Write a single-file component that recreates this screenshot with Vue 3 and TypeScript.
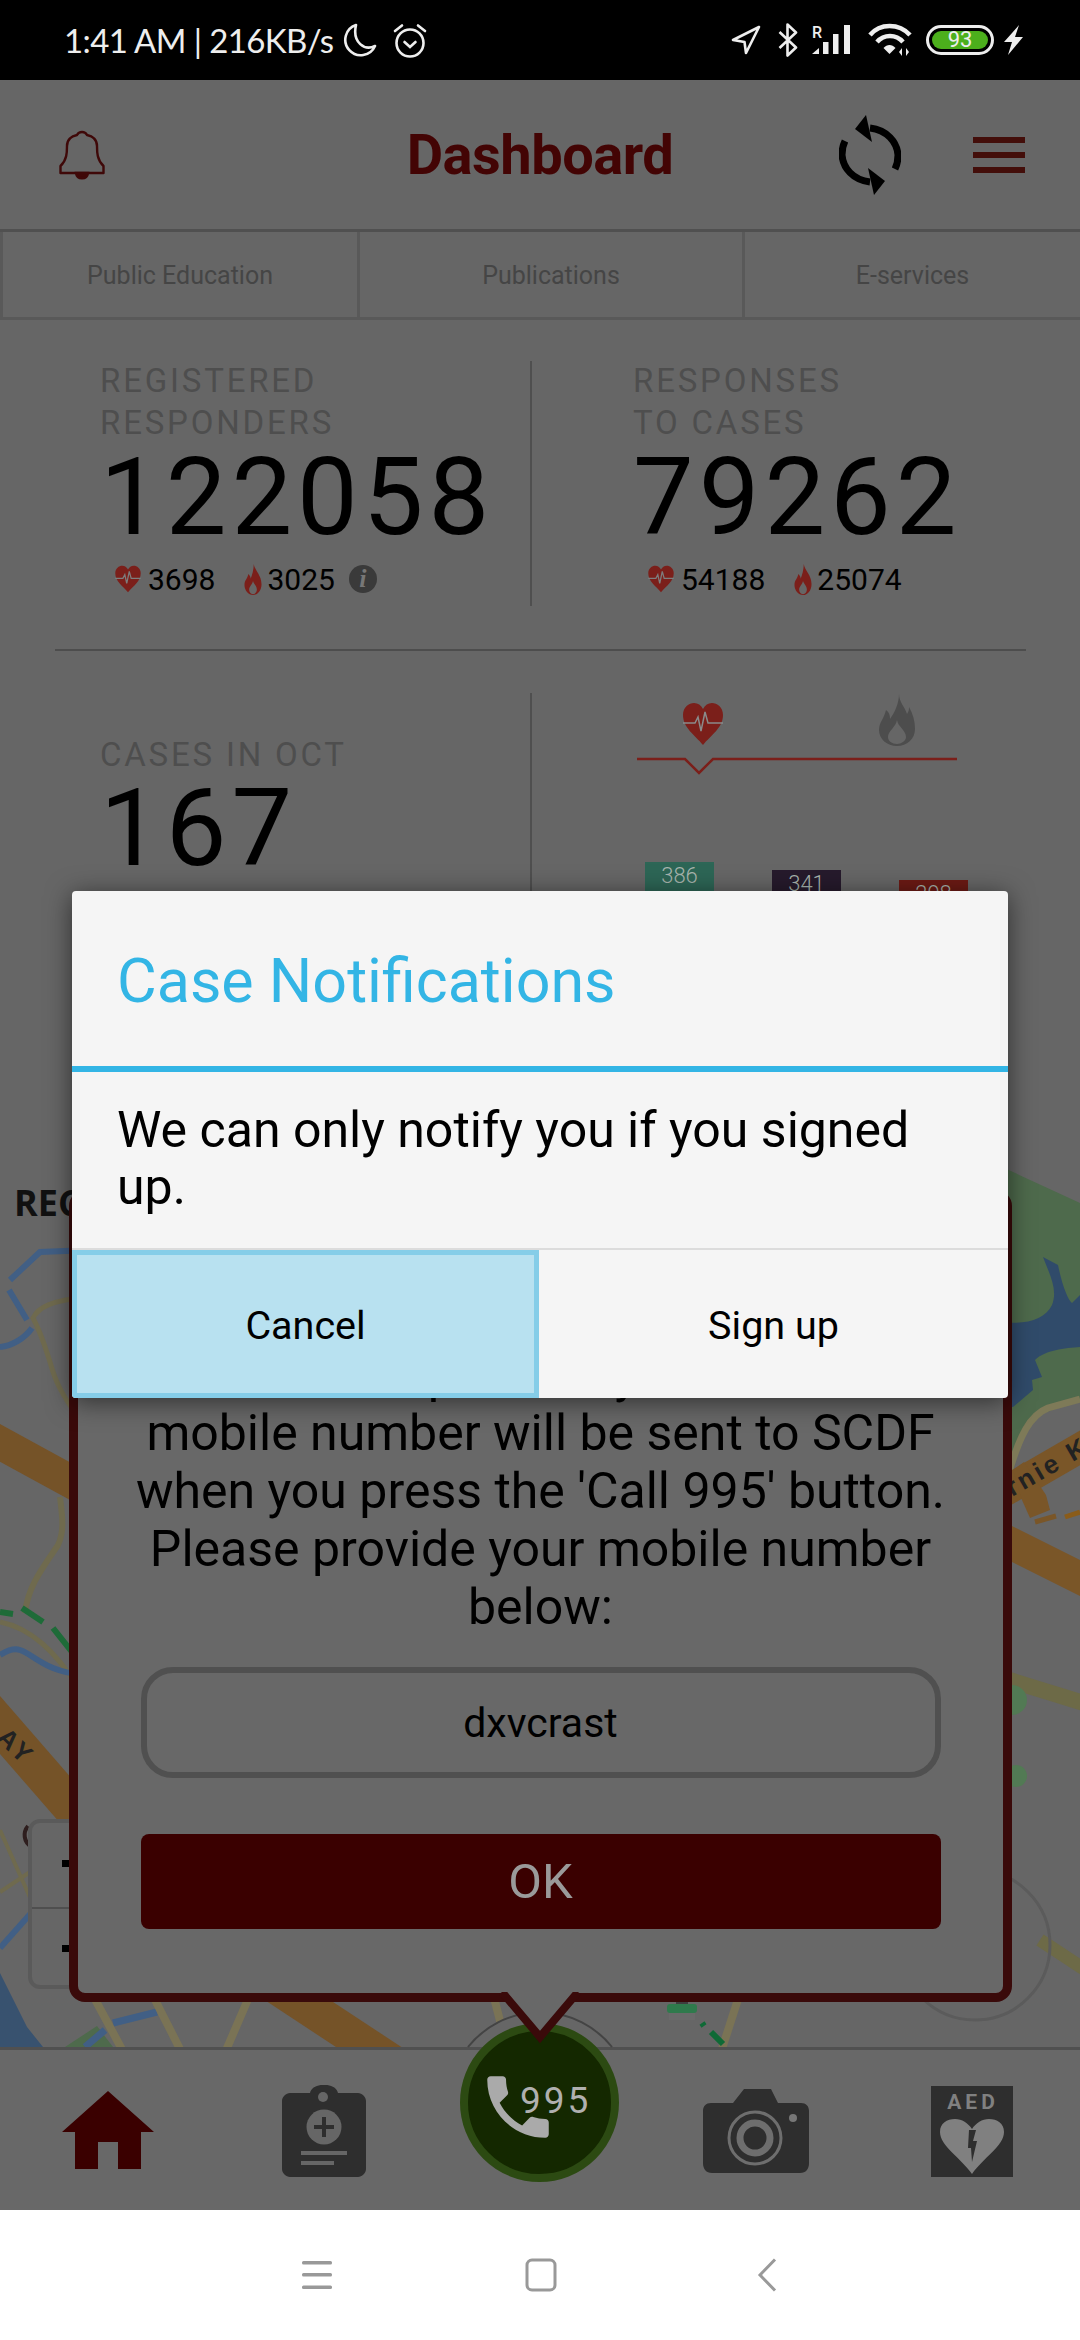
<template>
  <div class="phone">
    <div class="status">
      <div class="status-left">
        <span class="clock">1:41 AM | 216KB/s</span>
        <svg class="moon" width="34" height="34" viewBox="0 0 34 34" fill="none" stroke="#eee" stroke-width="2.6">
          <path d="M13 2 A15.5 15.5 0 1 0 32 23 C22 28 9 20 13 2Z" stroke-linejoin="round" />
        </svg>
        <svg class="alarm" width="34" height="35" viewBox="0 0 34 35" fill="none" stroke="#eee" stroke-width="2.6" stroke-linecap="round">
          <circle cx="17" cy="20" r="13.5" />
          <path d="M11.5 19 L17 24 L22.5 19" />
          <path d="M2 8 L9 2.5 M32 8 L25 2.5" />
        </svg>
      </div>
      <div class="status-right">
        <svg width="30" height="30" viewBox="0 0 30 30" fill="none" stroke="#eee" stroke-width="2.6" stroke-linejoin="round">
          <path d="M28 2 L2 15 L13.5 17 L15 28Z" />
        </svg>
        <svg class="bt" width="20" height="34" viewBox="0 0 20 34" fill="none" stroke="#eee" stroke-width="2.6" stroke-linejoin="round">
          <path d="M1.5 9 L18 24.5 L9.5 32.5 V1.5 L18 9.5 L1.5 25" />
        </svg>
        <div class="signal">
          <span class="roam">R</span>
          <svg width="40" height="30" viewBox="0 0 40 30" fill="#eee">
            <path d="M0 29 L7 23 V29Z" />
            <rect x="11" y="17" width="5.5" height="12" />
            <rect x="21" y="9" width="5.5" height="20" />
            <rect x="32" y="0" width="6" height="29" />
          </svg>
        </div>
        <svg class="wifi" width="44" height="34" viewBox="0 0 44 34" fill="none" stroke="#eee" stroke-width="4.5">
          <path d="M2 12 C12 0 31 0 42 12" />
          <path d="M9 19 C16 11 28 11 35 19" />
          <path d="M15.500 25 L21.500 31 L27.500 25 C24 21 19 21 15.500 25Z" fill="#eee" stroke="none" />
          <path d="M34 33 V25 L31 29Z M38 25 V33 L41 29Z" fill="#eee" stroke="none" />
        </svg>
        <div class="battery"><span class="battery-fill">93</span></div>
        <svg class="bolt" width="20" height="30" viewBox="0 0 20 30" fill="#eee">
          <path d="M15 0 L0 17 H8 L4 30 L19 12 H11Z" />
        </svg>
      </div>
    </div>

    <div class="screen">
      <header class="top-bar">
        <div class="top-left">
          <svg width="46" height="50" viewBox="0 0 46 50" fill="none" stroke="#3f0808" stroke-width="2.4">
            <path d="M1.500 43 V36 C8 30 8 22 8 16 C8 10 12 6 18 5 C20 1 26 1 28 5 C34 6 38 10 38 16 C38 22 38 30 44.500 36 V43Z" stroke-linejoin="round" />
            <path d="M17 43 C18 50 28 50 29 43Z" fill="#3f0808" />
          </svg>
        </div>
        <h1 class="title">Dashboard</h1>
        <div class="top-right">
          <svg width="62" height="80" viewBox="0 0 62 80" fill="none" stroke="#000" stroke-width="7">
            <path d="M31 13 C48 15 58 27 59 40 C59 45 58 50 56 54" />
            <path d="M31 67 C14 65 4 53 3 40 C3 35 4 30 6 26" />
            <path d="M27 0 L16 14 L33 27Z" fill="#000" stroke="none" />
            <path d="M35 80 L46 66 L29 53Z" fill="#000" stroke="none" />
          </svg>
          <div class="burger"><span></span><span></span><span></span></div>
        </div>
      </header>

      <nav class="sub-tabs">
        <div v-for="tab in subTabs" :key="tab" class="sub-tab">{{ tab }}</div>
      </nav>

      <section class="stats">
        <div class="stat-row">
          <div v-for="stat in totals" :key="stat.value" class="stat-cell">
            <div class="stat-label">{{ stat.line1 }}<br />{{ stat.line2 }}</div>
            <div class="stat-value">{{ stat.value }}</div>
            <div class="stat-split">
              <svg class="mini-heart" width="28" height="30" viewBox="0 0 44 44">
                <path d="M22 43 C14 33 2 26 2 13 C2 5 8 1 13 1 C17 1 20 3 22 7 C24 3 27 1 31 1 C36 1 42 5 42 13 C42 26 30 33 22 43Z" fill="#7b1f1a" />
                <path d="M2 21 H14 L17 15 L20 29 L24 10 L27 21 H42" fill="none" stroke="#7d7d7d" stroke-width="2" />
              </svg>
              <span class="split-num">{{ stat.heart }}</span>
              <svg class="mini-flame" width="20" height="31" viewBox="0 0 24 40">
                <path d="M13 0 C14 8 23 14 23 26 C23 34 18 40 12 40 C6 40 1 34 1 27 C1 21 5 19 6 13 C8 15 9 17 9 19 C11 14 13 7 13 0Z" fill="#7b1f1a" />
                <path d="M12 22 C13 26 17 28 17 33 C17 36 15 39 12 39 C9 39 7 36 7 33 C7 29 11 27 12 22Z" fill="#666" />
              </svg>
              <span class="split-num">{{ stat.fire }}</span>
              <span v-if="stat.info" class="info">i</span>
            </div>
          </div>
        </div>

        <div class="stat-rule"></div>

        <div class="stat-row month-row">
          <div class="stat-cell month-cell">
            <div class="stat-label">CASES IN OCT</div>
            <div class="stat-value">167</div>
          </div>
          <div class="stat-cell chart-cell">
            <div class="chart-tabs">
              <svg width="46" height="44" viewBox="0 0 44 44">
                <path d="M22 43 C14 33 2 26 2 13 C2 5 8 1 13 1 C17 1 20 3 22 7 C24 3 27 1 31 1 C36 1 42 5 42 13 C42 26 30 33 22 43Z" fill="#7b1f1a" />
                <path d="M2 21 H14 L17 15 L20 29 L24 10 L27 21 H42" fill="none" stroke="#8a8a8a" stroke-width="1.500" />
              </svg>
              <svg width="38" height="52" viewBox="0 0 38 52">
                <path d="M21 0 C21 8 27 13 29 20 C31 17 31 15 31 13 C35 20 37 27 37 35 C37 45 29 52 19 52 C9 52 1 45 1 36 C1 28 6 25 8 16 C11 18 12 21 12 25 C17 18 21 9 21 0Z" fill="#4d4d4d" />
                <path d="M19 26 C20 33 28 36 28 43 C28 47 23 50 19 50 C14 50 10 47 10 43 C10 37 18 33 19 26Z" fill="#666" />
              </svg>
            </div>
            <svg class="chart-line" width="320" height="20" viewBox="0 0 320 20" fill="none" stroke="#7b1f1a" stroke-width="2.500">
              <path d="M0 3 H48 L62 17 L76 3 H320" />
            </svg>
            <div class="bars">
              <div v-for="bar in bars" :key="bar.label" class="bar" :style="{ height: bar.height + 'px', background: bar.color }">
                {{ bar.label }}
              </div>
            </div>
          </div>
        </div>
      </section>

      <section class="map">
        <svg class="map-canvas" width="1080" height="887" viewBox="0 1160 1080 887" fill="none">
          <!-- left edge -->
          <path d="M90 1250 L40 1252 L10 1280 M9 1290 L27 1320 M32 1328 C25 1338 12 1346 0 1347" stroke="#415f85" stroke-width="6" />
          <path d="M90 1297 C50 1300 38 1308 33 1318 C42 1335 46 1350 50 1362 C55 1380 60 1392 80 1420" stroke="#6f6a4e" stroke-width="5" />
          <path d="M-20 1432 L110 1503" stroke="#755328" stroke-width="33" />
          <path d="M60 1497 C62 1515 65 1530 58 1545 C45 1565 28 1585 25 1613" stroke="#6f6a4e" stroke-width="6" />
          <path d="M0 1622 C30 1628 55 1650 80 1690" stroke="#6f6a4e" stroke-width="5" />
          <path d="M0 1612 L13 1614 M22 1608 L43 1622 M53 1628 L72 1652" stroke="#1e6b38" stroke-width="6" />
          <path d="M0 1655 C8 1650 14 1648 20 1650 C35 1655 45 1672 85 1675" stroke="#415f85" stroke-width="6" />
          <path d="M-20 1702 L100 1840" stroke="#755328" stroke-width="38" />
          <text x="0" y="1752" class="map-label" transform="rotate(44 14 1740)">AY</text>
          <path d="M0 1830 L32 1902 M0 1892 L30 1872" stroke="#6f6a4e" stroke-width="4" />
          <path d="M0 1948 L32 1912" stroke="#415f85" stroke-width="6" />
          <path d="M0 1973 L27 2027 L43 2047 H0Z" fill="#38526f" />
          <path d="M28 1826 C23 1832 23 1842 32 1847" stroke="#2e1e1e" stroke-width="4" />
          <rect x="30" y="1821" width="60" height="166" rx="10" fill="#666" stroke="#5a5a5a" stroke-width="4" />
          <path d="M32 1908 H70" stroke="#4f4f4f" stroke-width="2" />
          <rect x="62" y="1860" width="7" height="7" fill="#000" />
          <rect x="62" y="1945" width="7" height="7" fill="#000" />

          <!-- bottom strip -->
          <path d="M65 2047 L97 2026 L113 2047Z" fill="#4e6a4c" />
          <path d="M85 2047 L105 2030" stroke="#415f85" stroke-width="7" />
          <path d="M113 2023 L157 2012" stroke="#415f85" stroke-width="7" />
          <path d="M90 1990 L125 2055 M150 1990 L183 2055 M252 1990 L224 2055 M492 1990 L505 2040" stroke="#7a7355" stroke-width="8" />
          <path d="M270 1982 L396 2065" stroke="#755328" stroke-width="36" />
          <path d="M741 1990 L720 2055" stroke="#7a7355" stroke-width="8" />
          <path d="M702 2023 L704 2026 M711 2032 L723 2044" stroke="#0f6a36" stroke-width="6" />
          <rect x="676" y="1996" width="12" height="12" fill="#3e3e3e" />
          <rect x="667" y="2004" width="30" height="9" rx="3" fill="#2f7a4c" />
          <rect x="669" y="2013" width="26" height="7" fill="#6a6a6a" />

          <!-- right edge -->
          <path d="M1000 1166 L1080 1203 V1400 L1033 1417 L1000 1480Z" fill="#4e6a4c" />
          <path d="M1000 1322 C1025 1325 1045 1320 1052 1305 C1058 1290 1050 1275 1043 1257 L1058 1265 C1062 1285 1068 1300 1072 1303 L1080 1295 V1347 C1065 1348 1045 1350 1035 1360 L1042 1377 L1032 1380 L1033 1390 L1013 1407 H1000Z" fill="#304b6a" />
          <path d="M1008 1475 C1020 1435 1030 1415 1048 1408 L1080 1399" stroke="#7e7a58" stroke-width="7" />
          <path d="M990 1500 L1090 1442" stroke="#7a5628" stroke-width="30" />
          <path d="M1013 1470 L1024 1462 L1046 1495 L1050 1510 L1030 1518 L1022 1500Z" fill="#7a5628" />
          <path d="M1035 1522 L1056 1516" stroke="#7a5628" stroke-width="5" />
          <path d="M1065 1517 L1080 1512" stroke="#8a5c1a" stroke-width="5" />
          <path d="M990 1533 L1090 1583" stroke="#7a5628" stroke-width="32" />
          <text x="1012" y="1497" class="map-label" transform="rotate(-30 1012 1497)">rnie K</text>
          <path d="M990 1674 L1090 1705" stroke="#6d6a47" stroke-width="16" />
          <circle cx="1012" cy="1700" r="15" fill="#527a54" />
          <circle cx="1016" cy="1776" r="11" fill="#527a54" />
          <path d="M1040 1940 L1090 1973" stroke="#6d6a47" stroke-width="13" />
          <circle cx="975" cy="1945" r="75" stroke="#5b5b5b" stroke-width="3" />
        </svg>
        <div class="map-title">RECENT CASES</div>
      </section>

      <footer class="tab-bar">
        <div class="tab-item">
          <svg width="92" height="80" viewBox="0 0 92 80" fill="#3a0000">
            <path d="M46 0 L92 41 H79 V78 H56 V51 H36 V78 H13 V41 H0Z" />
          </svg>
        </div>
        <div class="tab-item">
          <svg width="84" height="92" viewBox="0 0 84 92">
            <path d="M8 8 H28 C30 -3 54 -3 56 8 H76 C80 8 84 12 84 16 V84 C84 88 80 92 76 92 H8 C4 92 0 88 0 84 V16 C0 12 4 8 8 8Z" fill="#2e2e2e" />
            <circle cx="41" cy="12" r="5" fill="#666" />
            <circle cx="42" cy="42" r="17.500" fill="#666" />
            <path d="M42 32 V52 M32 42 H52" stroke="#2e2e2e" stroke-width="4" />
            <path d="M19 68 H65" stroke="#666" stroke-width="4" />
            <path d="M19 78 H52" stroke="#666" stroke-width="4" />
          </svg>
        </div>
        <div class="tab-item call-slot">
          <svg class="call-arc" width="200" height="60" viewBox="0 0 200 60" fill="#666" stroke="#444" stroke-width="2">
            <path d="M28 44 A92 92 0 0 1 172 44" />
          </svg>
          <div class="call-button">
            <svg class="call-phone" width="82" height="82" viewBox="0 0 24 24" fill="#aaa">
              <path d="M6.620 10.790c1.440 2.830 3.760 5.140 6.590 6.590l2.200-2.200c.27-.27.67-.36 1.020-.24 1.120.37 2.330.57 3.570.57.55 0 1 .45 1 1V20c0 .55-.45 1-1 1-9.390 0-17-7.610-17-17 0-.55.45-1 1-1h3.500c.55 0 1 .45 1 1 0 1.250.2 2.450.57 3.570.11.35.03.74-.25 1.020l-2.200 2.200z" />
            </svg>
            <span class="call-num">995</span>
          </div>
        </div>
        <div class="tab-item">
          <svg width="106" height="84" viewBox="0 0 106 84">
            <path d="M30 14 L41 0 H68 L75 14 H98 C103 14 106 17 106 22 V74 C106 80 103 84 97 84 H9 C3 84 0 80 0 74 V22 C0 17 3 14 8 14Z" fill="#2e2e2e" />
            <circle cx="52" cy="49" r="26" fill="none" stroke="#6e6e6e" stroke-width="3" />
            <circle cx="52" cy="49" r="15" fill="none" stroke="#6e6e6e" stroke-width="7" />
            <circle cx="90" cy="29" r="4" fill="#777" />
          </svg>
        </div>
        <div class="tab-item">
          <svg width="82" height="91" viewBox="0 0 82 91">
            <rect width="82" height="91" fill="#2e2e2e" />
            <text x="42" y="23" text-anchor="middle" class="aed-text">AED</text>
            <path d="M41 88 C30 72 9 60 9 46 C9 37 16 33 24 33 C31 33 37 37 41 43 C45 37 51 33 58 33 C66 33 73 37 73 46 C73 60 52 72 41 88Z" fill="#808080" />
            <path d="M38 44 L45 44 L42 55 L46 55 L41 76 L40 62 L37 62Z" fill="#2e2e2e" />
          </svg>
        </div>
      </footer>

      <div class="popup">
        <p class="popup-text">Important: your<br />mobile number will be sent to SCDF<br />when you press the 'Call 995' button.<br />Please provide your mobile number<br />below:</p>
        <div class="popup-input">dxvcrast</div>
        <button class="popup-ok">OK</button>
        <svg class="popup-tail" width="84" height="56" viewBox="0 0 84 56" fill="#686868" stroke="#3a0a0a" stroke-width="8">
          <path d="M4 0 L42 45 L80 0" />
        </svg>
      </div>

      <div class="dialog">
        <div class="dialog-title">Case Notifications</div>
        <div class="dialog-body">We can only notify you if you signed up.</div>
        <div class="dialog-actions">
          <button class="dialog-btn pressed">Cancel</button>
          <button class="dialog-btn">Sign up</button>
        </div>
      </div>
    </div>

    <div class="system-nav">
      <svg width="32" height="30" viewBox="0 0 32 30" fill="#999">
        <rect x="1" y="1" width="30" height="3.500" rx="1.500" />
        <rect x="1" y="13" width="30" height="3.500" rx="1.500" />
        <rect x="1" y="25.500" width="30" height="3.500" rx="1.500" />
      </svg>
      <svg width="32" height="34" viewBox="0 0 32 34" fill="none" stroke="#999" stroke-width="3">
        <rect x="2" y="2" width="28" height="30" rx="5" />
      </svg>
      <svg class="nav-back" width="20" height="34" viewBox="0 0 20 34" fill="none" stroke="#999" stroke-width="3">
        <path d="M18 1.500 L3 17 L18 32.500" />
      </svg>
    </div>
  </div>
</template>

<script setup lang="ts">
interface TotalStat {
  line1: string
  line2: string
  value: string
  heart: string
  fire: string
  info: boolean
}

interface Bar {
  label: string
  height: number
  color: string
}

const subTabs: string[] = ['Public Education', 'Publications', 'E-services']

const totals: TotalStat[] = [
  { line1: 'REGISTERED', line2: 'RESPONDERS', value: '122058', heart: '3698', fire: '3025', info: true },
  { line1: 'RESPONSES', line2: 'TO CASES', value: '79262', heart: '54188', fire: '25074', info: false },
]

const bars: Bar[] = [
  { label: '386', height: 198, color: '#2d6656' },
  { label: '341', height: 190, color: '#261a2c' },
  { label: '298', height: 180, color: '#6c1a14' },
]
</script>

<style scoped>
.phone {
  width: 1080px;
  height: 2340px;
  display: flex;
  flex-direction: column;
  overflow: hidden;
  background: #fff;
  font-family: Roboto, "Liberation Sans", sans-serif;
}

.status {
  height: 80px;
  flex: none;
  background: #000;
  display: flex;
  justify-content: space-between;
  align-items: center;
  padding: 0 56px 0 64px;
}

.status-left,
.status-right {
  display: flex;
  align-items: center;
}

.clock {
  font-family: Lato, "Noto Sans", sans-serif;
  font-size: 33px;
  letter-spacing: -0.6px;
  color: #eee;
  white-space: pre;
}

.moon {
  margin-left: 9px;
}

.alarm {
  margin-left: 16px;
}

.bt {
  margin-left: 17px;
}

.signal {
  position: relative;
  margin-left: 14px;
  width: 40px;
  height: 30px;
}

.roam {
  position: absolute;
  left: 0;
  top: -2px;
  font-size: 16px;
  font-weight: 500;
  color: #eee;
}

.wifi {
  margin-left: 16px;
}

.battery {
  width: 68px;
  height: 30px;
  margin-left: 14px;
  border: 3px solid #eee;
  border-radius: 15px;
  padding: 3px;
  box-sizing: border-box;
  display: flex;
}

.battery-fill {
  flex: 1;
  border-radius: 9px;
  background: #4caf1c;
  color: #eee;
  font-size: 22px;
  line-height: 18px;
  text-align: center;
}

.bolt {
  margin-left: 10px;
}

.screen {
  flex: 1;
  position: relative;
  display: flex;
  flex-direction: column;
  background: #666;
  min-height: 0;
}

.top-bar {
  height: 152px;
  flex: none;
  box-sizing: border-box;
  border-bottom: 3px solid #505050;
  display: grid;
  grid-template-columns: 1fr auto 1fr;
  align-items: center;
}

.top-left {
  padding: 0 0 0 59px;
  display: flex;
}

.title {
  margin: 0;
  font-size: 56px;
  font-weight: 700;
  color: #430404;
  letter-spacing: -0.5px;
}

.top-right {
  display: flex;
  justify-content: flex-end;
  align-items: center;
  gap: 72px;
  padding-right: 55px;
}

.burger {
  width: 52px;
  display: flex;
  flex-direction: column;
  gap: 9px;
}

.burger span {
  height: 6px;
  background: #430e0a;
}

.sub-tabs {
  height: 88px;
  flex: none;
  display: grid;
  grid-template-columns: 357px 385px 1fr;
  box-sizing: border-box;
  border-bottom: 3px solid #595959;
}

.sub-tab {
  display: flex;
  align-items: center;
  justify-content: center;
  padding-top: 2px;
  border-left: 3px solid #595959;
  font-size: 25px;
  color: #454545;
}

.stats {
  height: 840px;
  flex: none;
  overflow: hidden;
  box-sizing: border-box;
  padding-top: 41px;
}

.stat-row {
  display: grid;
  grid-template-columns: 530px 1fr;
  height: 245px;
}

.stat-cell {
  padding-left: 100px;
}

.stat-cell + .stat-cell {
  border-left: 2px solid #4f4f4f;
  padding-left: 101px;
}

.stat-label {
  margin-top: -1px;
  font-size: 33px;
  line-height: 42px;
  letter-spacing: 2.8px;
  color: #4e4e4e;
}

.stat-value {
  margin-top: 3px;
  font-size: 108px;
  line-height: 100px;
  letter-spacing: 5px;
  color: #000;
}

.stat-split {
  display: flex;
  align-items: center;
  margin: 17px 0 0 14px;
  height: 30px;
}

.split-num {
  margin-left: 6px;
  font-size: 30px;
  color: #000;
}

.mini-flame {
  margin-left: 28px;
}

.mini-flame + .split-num {
  margin-left: 4px;
}

.info {
  width: 28px;
  height: 28px;
  margin-left: 14px;
  border-radius: 50%;
  background: #3a3a3a;
  color: #777;
  font-family: "Liberation Serif", serif;
  font-style: italic;
  font-weight: 700;
  font-size: 26px;
  line-height: 28px;
  text-align: center;
}

.stat-rule {
  height: 2px;
  margin: 43px 54px 42px 55px;
  background: #4d4d4d;
}

.month-row {
  height: 470px;
}

.month-cell {
  padding-top: 42px;
}

.month-cell .stat-value {
  margin-top: 2px;
}

.stat-cell + .chart-cell {
  padding-left: 105px;
  padding-right: 112px;
}

.chart-tabs {
  display: flex;
  gap: 152px;
  align-items: flex-end;
  padding-left: 43px;
  height: 52px;
  margin-top: 1px;
}

.chart-line {
  display: block;
  margin-top: 10px;
}

.bars {
  display: flex;
  justify-content: space-between;
  align-items: flex-end;
  height: 198px;
  margin: 86px 0 0 8px;
}

.bar {
  width: 69px;
  box-sizing: border-box;
  padding-top: 1px;
  text-align: center;
  font-size: 22px;
  font-weight: 300;
  color: #a9b5ae;
}

.map {
  flex: 1;
  position: relative;
  overflow: hidden;
  min-height: 0;
}

.map-canvas {
  position: absolute;
  left: 0;
  top: 0;
}

.map-label {
  font-family: "Liberation Sans", sans-serif;
  font-size: 26px;
  font-weight: 700;
  fill: #222;
  letter-spacing: 3px;
}

.aed-text {
  font-family: Roboto, sans-serif;
  font-size: 21px;
  font-weight: 700;
  fill: #808080;
  letter-spacing: 4px;
}

.map-title {
  position: relative;
  padding: 21px 0 0 14px;
  font-family: "Open Sans", sans-serif;
  font-size: 36px;
  line-height: 44px;
  font-weight: 700;
  color: #111;
}

.tab-bar {
  height: 163px;
  flex: none;
  box-sizing: border-box;
  border-top: 3px solid #505050;
  background: #686868;
  display: grid;
  grid-template-columns: repeat(5, 1fr);
  align-items: center;
}

.tab-item {
  display: flex;
  justify-content: center;
  align-items: center;
  height: 100%;
  padding-top: 2px;
  box-sizing: border-box;
}

.call-slot {
  position: relative;
}

.call-arc {
  position: absolute;
  left: 8px;
  top: -47px;
}

.call-button {
  position: absolute;
  left: 28px;
  top: -27px;
  width: 159px;
  height: 159px;
  box-sizing: border-box;
  border: 8px solid #2c4a12;
  border-radius: 50%;
  background: #142800;
}

.call-phone {
  position: absolute;
  left: 9px;
  top: 35px;
}

.call-num {
  position: absolute;
  left: 52px;
  top: 50px;
  font-size: 37px;
  line-height: 40px;
  letter-spacing: 3px;
  color: #b0b0b0;
}

.popup {
  position: absolute;
  left: 69px;
  top: 1110px;
  width: 943px;
  height: 812px;
  box-sizing: border-box;
  border: 9px solid #3a0a0a;
  border-radius: 16px;
  background: #686868;
  padding-top: 147px;
  display: flex;
  flex-direction: column;
  align-items: center;
}

.popup-text {
  margin: 0;
  font-size: 50px;
  line-height: 58px;
  text-align: center;
  color: #000;
}

.popup-input {
  width: 800px;
  height: 111px;
  margin-top: 31px;
  box-sizing: border-box;
  border: 6px solid #505050;
  border-radius: 32px;
  display: flex;
  align-items: center;
  justify-content: center;
  font-size: 41px;
  color: #000;
}

.popup-ok {
  width: 800px;
  height: 95px;
  margin-top: 56px;
  border: 0;
  border-radius: 8px;
  background: #3a0000;
  font-family: inherit;
  font-size: 49px;
  color: #9a9a9a;
}

.popup-tail {
  position: absolute;
  left: 420px;
  bottom: -55px;
}

.dialog {
  position: absolute;
  left: 72px;
  top: 811px;
  width: 936px;
  height: 507px;
  border-radius: 4px;
  background: #f5f5f5;
  box-shadow: 0 4px 26px rgba(0, 0, 0, 0.55);
  display: flex;
  flex-direction: column;
  overflow: hidden;
}

.dialog-title {
  height: 175px;
  flex: none;
  box-sizing: content-box;
  border-bottom: 6px solid #33b5e5;
  padding-left: 45px;
  font-size: 61px;
  line-height: 181px;
  color: #33b5e5;
}

.dialog-body {
  flex: 1;
  padding: 30px 60px 0 45px;
  font-size: 50px;
  line-height: 57px;
  color: #000;
}

.dialog-actions {
  height: 150px;
  flex: none;
  border-top: 2px solid #dcdcdc;
  box-sizing: border-box;
  display: grid;
  grid-template-columns: 467px 1fr;
}

.dialog-btn {
  border: 0;
  padding: 3px 0 0;
  background: none;
  font-family: inherit;
  font-size: 39.5px;
  color: #000;
}

.dialog-btn.pressed {
  background: #b8e1f0;
  border: 5px solid #85cde8;
}

.system-nav {
  height: 130px;
  flex: none;
  background: #fff;
  display: flex;
  align-items: center;
  padding: 0 0 0 301px;
  gap: 192px;
}

.nav-back {
  margin-left: 8px;
}
</style>
